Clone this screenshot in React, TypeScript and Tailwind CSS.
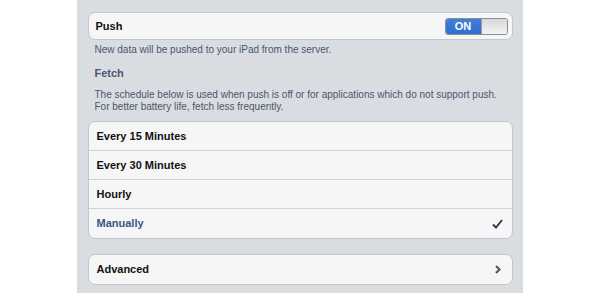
import React from "react";

const font = { fontFamily: '"Liberation Sans", Arial, sans-serif' };

function Row({ label, blue, right, last }: { label: string; blue?: boolean; right?: React.ReactNode; last?: boolean }) {
  return (
    <div
      className={`flex h-[29px] items-center justify-between pl-[8px] pr-[9px] ${last ? "" : "border-b border-[#cfd1d4]"}`}
    >
      <span className={`text-[11px] font-bold ${blue ? "text-[#3a5486]" : "text-[#111]"}`}>{label}</span>
      {right}
    </div>
  );
}

export default function App() {
  return (
    <div className="flex h-[293px] w-[600px] justify-center bg-white" style={font}>
      <div className="ml-[-1px] flex h-full w-[446px] flex-col bg-[#d9dde2] pl-[11px] pr-[10px] pt-[12px]">
        <div className="flex h-[28px] items-center justify-between rounded-[7px] border border-[#c3c6ca] bg-[#f6f6f6] pl-[7px] pr-[4px]">
          <span className="text-[11px] font-bold text-[#111]">Push</span>
          <div className="flex h-[17px] w-[63px] overflow-hidden rounded-[3px] border border-[#8a8d91]">
            <div className="flex w-[35px] items-center justify-center bg-gradient-to-b from-[#3f7fd8] to-[#2f6fd0] text-[11px] font-bold text-white">
              ON
            </div>
            <div className="flex-1 border-l border-[#9a9da1] bg-gradient-to-b from-[#d8d8d8] to-[#f4f4f4]" />
          </div>
        </div>
        <div className="mt-[4px] pl-[7px] text-[10px] leading-[12px] text-[#4c566c]">
          New data will be pushed to your iPad from the server.
        </div>
        <div className="mt-[11px] pl-[7px] text-[11px] font-bold leading-[13px] text-[#4c566c]">Fetch</div>
        <div className="mt-[9px] pl-[7px] text-[10px] leading-[12px] text-[#4c566c]">
          The schedule below is used when push is off or for applications which do not support push.
          <br />
          For better battery life, fetch less frequently.
        </div>
        <div className="mt-[8px] overflow-hidden rounded-[7px] border border-[#c3c6ca] bg-[#f6f6f6]">
          <Row label="Every 15 Minutes" />
          <Row label="Every 30 Minutes" />
          <Row label="Hourly" />
          <Row
            label="Manually"
            blue
            last
            right={
              <svg width="11" height="10" viewBox="0 0 11 10">
                <path d="M1 5.5 L4 8.5 L10 1" fill="none" stroke="#2c3e62" strokeWidth="2" />
              </svg>
            }
          />
        </div>
        <div className="mt-[15px] overflow-hidden rounded-[7px] border border-[#c3c6ca] bg-[#f6f6f6]">
          <Row
            label="Advanced"
            last
            right={
              <svg width="8" height="9" viewBox="0 0 8 9" className="mr-[1px]">
                <path d="M2 1 L5.5 4.5 L2 8" fill="none" stroke="#555" strokeWidth="2" />
              </svg>
            }
          />
        </div>
      </div>
    </div>
  );
}
